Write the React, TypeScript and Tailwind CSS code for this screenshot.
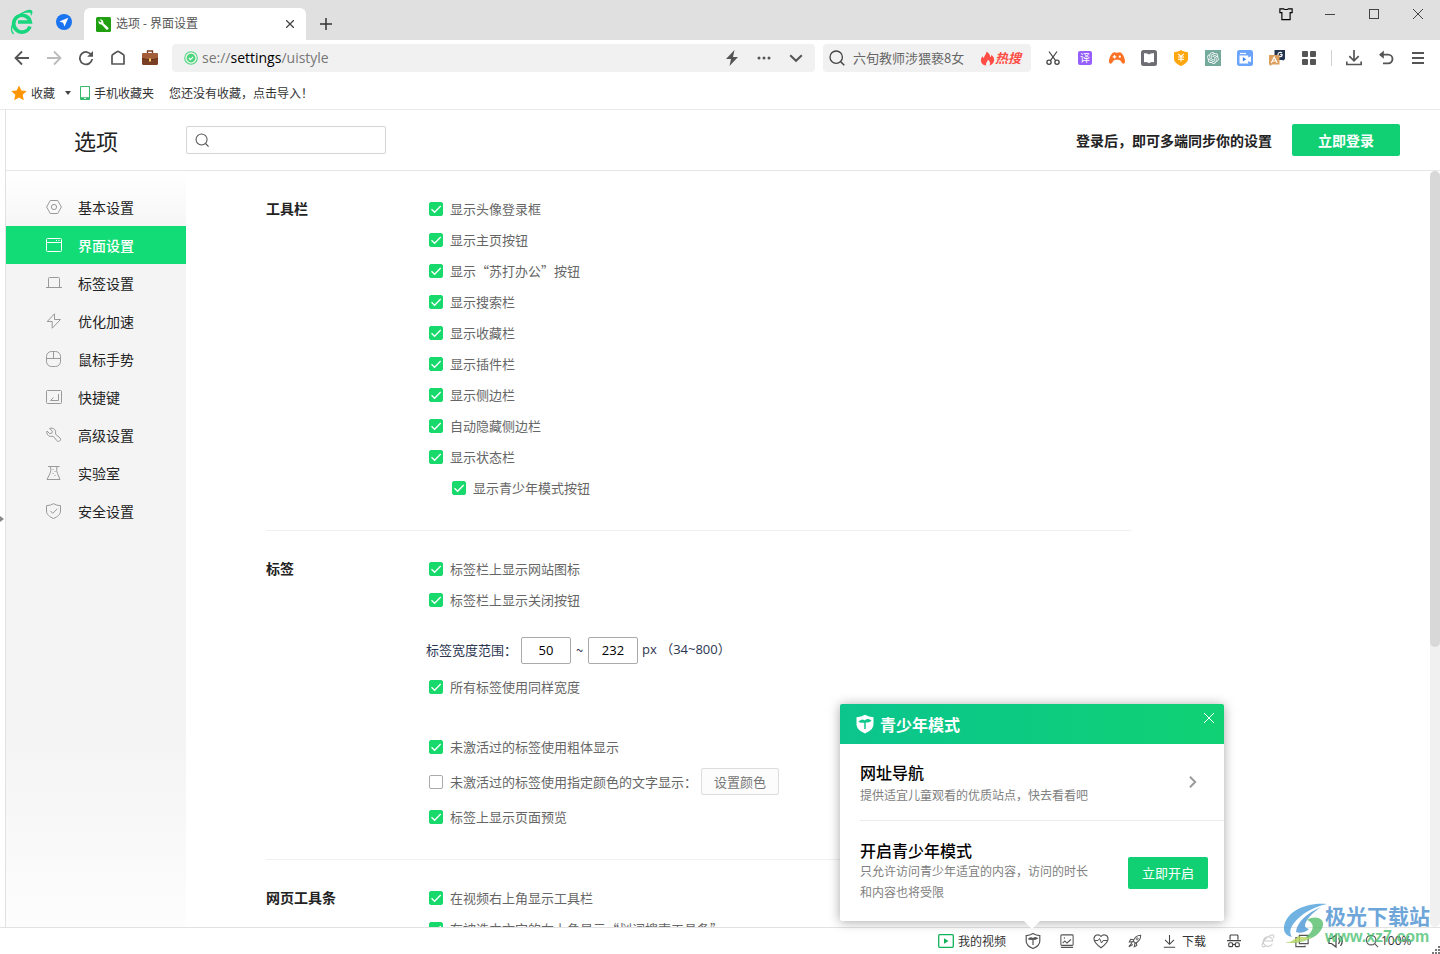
import { useState } from "react"
import type { ReactNode } from "react"
import { RiOpenaiFill } from "react-icons/ri"

interface IconProps {
    size?: number
    className?: string
    children: ReactNode
}

// 16x16 grid, stroked with the current text colour
function Icon({ size = 16, className = "", children }: IconProps) {
    return (
        <svg
            width={size}
            height={size}
            viewBox="0 0 16 16"
            fill="none"
            stroke="currentColor"
            strokeWidth="1"
            className={`shrink-0 ${className}`}
            aria-hidden="true"
        >
            {children}
        </svg>
    )
}

function BrowserLogo() {
    return (
        <svg width="24" height="26" viewBox="0 0 24 26" fill="none" aria-hidden="true">
            <path d="M20 17.500A8.400 8.400 0 1 1 20.300 13H8" stroke="#17d67e" strokeWidth="3.600" />
            <path d="M19 3C14 2 8 5.500 4.500 11.500 1.500 16.500.5 22 3.500 25" stroke="#17d67e" strokeWidth="1.300" />
            <path d="M11 4.500C15 1.500 20.500-.4 22 1.800c1 1.500.2 3.500-1.200 5.700.4-2.300.2-3.800-1.800-4.100-2.400-.4-5.200.3-8 1.100z" fill="#17d67e" />
        </svg>
    )
}

function TabStrip() {
    return (
        <header className="flex h-10 shrink-0 items-end bg-[#e0e0e0]">
            <div className="flex h-10 w-[84px] items-center pt-1 pl-[10px]">
                <button aria-label="浏览器菜单">
                    <BrowserLogo />
                </button>
                <button className="ml-[22px]" aria-label="导航">
                    <svg width="16" height="16" viewBox="0 0 16 16" aria-hidden="true">
                        <circle cx="8" cy="8" r="8" fill="#1a73f0" />
                        <path d="M12.300 3.700 3.400 7.500l3.700 1.300 1.400 3.700z" fill="#fff" />
                    </svg>
                </button>
            </div>
            <div className="flex h-8 w-[222px] items-center rounded-t-md bg-white px-3 text-xs text-[#555]">
                <svg width="15" height="15" viewBox="0 0 15 15" aria-hidden="true">
                    <rect width="15" height="15" rx="1.500" fill="#20a010" />
                    <path d="M3.600 2.600l1.900 1.900-.9 1.100-2-1.900c-.6 2.200 1 4 3 3.700l4.700 5c1.400 1 2.900-.5 1.900-1.900L7.400 6.200c.6-2.300-1.300-4.500-3.800-3.600z" fill="#fff" />
                </svg>
                <span className="ml-[5px] flex-1 font-['Open_Sans','Noto_Sans_CJK_SC',sans-serif]">选项 - 界面设置</span>
                <button aria-label="关闭标签">
                    <Icon size={8} className="text-[#444]">
                        <path d="M0 0l16 16M16 0L0 16" strokeWidth="2.600" />
                    </Icon>
                </button>
            </div>
            <button className="flex h-8 w-10 items-center justify-center text-[#333]" aria-label="新建标签">
                <svg width="12" height="12" viewBox="0 0 12 12" stroke="currentColor" strokeWidth="1.500" aria-hidden="true">
                    <path d="M6 0v12M0 6h12" />
                </svg>
            </button>
            <div className="ml-auto flex h-10 items-start text-[#444]">
                <button className="flex h-7 w-11 items-center justify-center text-black" aria-label="皮肤">
                    <Icon size={14}>
                        <path d="M1 2.200h4.500q2.500 1.400 5 0H15V6.500h-2.300v8H3.300v-8H1z" strokeWidth="1.300" />
                    </Icon>
                </button>
                <button className="flex h-7 w-11 items-center justify-center" aria-label="最小化">
                    <span className="h-px w-[10px] bg-[#444]" />
                </button>
                <button className="flex h-7 w-11 items-center justify-center" aria-label="最大化">
                    <span className="size-[10px] border border-[#444]" />
                </button>
                <button className="flex h-7 w-11 items-center justify-center" aria-label="关闭">
                    <Icon size={10}>
                        <path d="M0 0l16 16M16 0L0 16" strokeWidth="1.600" />
                    </Icon>
                </button>
            </div>
        </header>
    )
}

function ToolButton({ label, children }: { label: string; children: ReactNode }) {
    return (
        <button className="flex h-7 w-8 shrink-0 items-center justify-center" aria-label={label}>
            {children}
        </button>
    )
}

function Extensions() {
    return (
        <div className="ml-[6px] flex items-center text-[#444]">
            <ToolButton label="截图">
                <Icon>
                    <path d="M4 1.500l6.800 9.300M12 1.500L5.200 10.800" strokeWidth="1.200" />
                    <circle cx="4" cy="12.300" r="2.100" strokeWidth="1.300" />
                    <circle cx="12" cy="12.300" r="2.100" strokeWidth="1.300" />
                </Icon>
            </ToolButton>
            <ToolButton label="翻译">
                <span className="flex size-[14px] items-center justify-center rounded-xs bg-[#965ffb] text-[10px] leading-none text-white">译</span>
            </ToolButton>
            <ToolButton label="游戏">
                <Icon>
                    <path d="M4.500 2.500c1-.6 2 .3 3.500.3s2.500-.9 3.500-.3C14 3.500 16 8.500 16 11.500c0 2.800-2.500 2.800-3.800.2-.8-1.500-1.700-1.900-4.200-1.900s-3.400.4-4.200 1.900C2.500 14.300 0 14.300 0 11.500c0-3 2-8 4.500-9z" fill="#fb7226" stroke="none" />
                    <path d="M5.500 5v3.600M3.700 6.800h3.600" stroke="#fff" strokeWidth="1.200" />
                    <circle cx="10.800" cy="6.700" r="1.100" fill="#fff" stroke="none" />
                </Icon>
            </ToolButton>
            <ToolButton label="小说">
                <Icon>
                    <rect width="16" height="16" rx="2.500" fill="#6d6d73" stroke="none" />
                    <path d="M3 3.200q2.800-.4 5 1.400 2.200-1.800 5-1.400v9q-2.800-.6-5 1-2.200-1.600-5-1z" fill="#fff" stroke="none" />
                </Icon>
            </ToolButton>
            <ToolButton label="网购助手">
                <Icon>
                    <path d="M8 0c2.300 1.600 4.500 2 7 2.200V9c0 3-3.500 5.600-7 7-3.500-1.400-7-4-7-7V2.200C3.500 2 5.700 1.600 8 0z" fill="#ffa70f" stroke="none" />
                    <path d="M5.200 3.800L8 6.500l2.800-2.700M5 7h6M5 9.200h6M8 6.500v5" stroke="#fff" strokeWidth="1.100" />
                </Icon>
            </ToolButton>
            <ToolButton label="ChatGPT">
                <span className="flex size-4 items-center justify-center bg-[#74aa9c] text-white">
                    <RiOpenaiFill size={14} />
                </span>
            </ToolButton>
            <ToolButton label="录屏">
                <Icon>
                    <rect width="16" height="16" rx="2.500" fill="#6ba4fb" stroke="none" />
                    <path d="M3 3.500h6" stroke="#fff" strokeWidth="1.200" />
                    <path d="M2.500 5.500h8.700v2l2.800-1.200v6L11.200 11v2.500H2.500z" fill="#fff" stroke="none" />
                    <path d="M5.800 7l3.400 2.300-3.400 2.300z" fill="#3d7ff5" stroke="none" />
                </Icon>
            </ToolButton>
            <ToolButton label="划词翻译">
                <Icon>
                    <path d="M5.500 0H16v9l-1.500 1.500L13 10H5.500z" fill="#22344f" stroke="none" />
                    <path d="M13 3c-1.600-1.300-4-.6-4 1.600 0 2.200 2.600 2.600 4 1.300V4.700h-1.800" stroke="#fff" strokeWidth="1.200" />
                    <path d="M0 5h10.500v9.500H3L1 16l-.3-1.500H0z" fill="#dc9d5d" stroke="none" />
                    <path d="M2.300 13L5.200 7l3 6M3.400 11h3.800" stroke="#fff" strokeWidth="1.200" />
                </Icon>
            </ToolButton>
            <ToolButton label="全部扩展">
                <Icon>
                    <g fill="#555" stroke="none">
                        <rect x="1" y="1" width="6" height="6" rx="1" />
                        <rect x="9" y="1" width="6" height="6" rx="1" />
                        <rect x="1" y="9" width="6" height="6" rx="1" />
                        <rect x="9" y="9" width="6" height="6" rx="1" />
                    </g>
                </Icon>
            </ToolButton>
            <span className="mx-[6px] h-4 w-px bg-[#d0d0d0]" />
            <ToolButton label="下载">
                <Icon>
                    <path d="M8 0v10.500M3.300 6.200L8 10.800l4.700-4.600M.8 11.500v3h14.400v-3" stroke="#555" strokeWidth="1.700" />
                </Icon>
            </ToolButton>
            <ToolButton label="恢复">
                <Icon>
                    <path d="M2 4.700h8.200a4.200 4.200 0 0 1 0 8.600H5" stroke="#555" strokeWidth="1.800" />
                    <path d="M1 4.700L5.800.6v8.200z" fill="#555" stroke="none" />
                </Icon>
            </ToolButton>
            <ToolButton label="菜单">
                <Icon>
                    <path d="M2 3h12M2 8h12M2 13h12" stroke="#555" strokeWidth="1.800" />
                </Icon>
            </ToolButton>
        </div>
    )
}

function Toolbar() {
    return (
        <div className="flex h-9 shrink-0 items-center bg-white px-[6px]">
            <ToolButton label="后退">
                <Icon className="text-[#555]">
                    <path d="M15 8H1.500M8 1.500L1.500 8 8 14.500" strokeWidth="1.800" />
                </Icon>
            </ToolButton>
            <ToolButton label="前进">
                <Icon className="text-[#bbb]">
                    <path d="M1 8h13.500M8 1.500L14.500 8 8 14.500" strokeWidth="1.800" />
                </Icon>
            </ToolButton>
            <ToolButton label="刷新">
                <Icon className="text-[#555]">
                    <path d="M13.500 5.200A6.200 6.200 0 1 0 14.200 9" strokeWidth="1.800" />
                    <path d="M15 1v5.800H9.200z" fill="currentColor" stroke="none" />
                </Icon>
            </ToolButton>
            <ToolButton label="主页">
                <Icon className="text-[#555]">
                    <path d="M2 6q0-1 .8-1.500L7 1.700q1-.7 2 0l4.200 2.800Q14 5 14 6v8H2z" strokeWidth="1.700" strokeLinejoin="round" />
                </Icon>
            </ToolButton>
            <ToolButton label="苏打办公">
                <Icon>
                    <path d="M5.500 3V1h5v2" stroke="#7a3b1f" strokeWidth="1.300" />
                    <rect y="3" width="16" height="12" rx="1.500" fill="#7a3f24" stroke="none" />
                    <path d="M0 4.500Q0 3 1.500 3h13Q16 3 16 4.500V8q-8 3-16 0z" fill="#a35d38" stroke="none" />
                    <path d="M0 8.500q8 3 16 0" stroke="#5c2c15" strokeWidth=".8" />
                    <rect x="7" y="8.500" width="2" height="3" fill="#f6cf6a" stroke="none" />
                </Icon>
            </ToolButton>

            <div className="ml-[6px] flex h-7 flex-1 items-center rounded bg-[#f1f1f1] pr-[3px] pl-3">
                <Icon size={14} className="text-[#4bd67b]">
                    <circle cx="8" cy="8" r="7.200" strokeWidth="1.200" />
                    <circle cx="8" cy="8" r="5" fill="currentColor" stroke="none" />
                    <path d="M5.600 8l1.800 1.800 3-3.200" stroke="#fff" strokeWidth="1.300" />
                </Icon>
                <div className="ml-1 flex-1 font-['Open_Sans','Noto_Sans_CJK_SC',sans-serif] text-sm text-[#777]">
                    se://<span className="text-black">settings</span>/uistyle
                </div>
                <ToolButton label="极速模式">
                    <Icon className="text-[#555]">
                        <path d="M10.500 0L2 9h5L5.500 16 14 7H9z" fill="currentColor" stroke="none" />
                    </Icon>
                </ToolButton>
                <ToolButton label="更多">
                    <Icon className="text-[#555]">
                        <g fill="currentColor" stroke="none">
                            <circle cx="3" cy="8" r="1.500" />
                            <circle cx="8" cy="8" r="1.500" />
                            <circle cx="13" cy="8" r="1.500" />
                        </g>
                    </Icon>
                </ToolButton>
                <ToolButton label="展开地址栏">
                    <Icon className="text-[#555]">
                        <path d="M2.200 5.200L8 10.800l5.800-5.600" strokeWidth="2" />
                    </Icon>
                </ToolButton>
            </div>

            <div className="ml-2 flex h-7 w-52 items-center rounded bg-[#f1f1f1] pr-[10px] pl-[6px] text-[13px] text-[#666]">
                <Icon className="text-[#444]">
                    <circle cx="7.200" cy="7.200" r="6.200" strokeWidth="1.300" />
                    <path d="M11.700 11.700l3.600 3.600" strokeWidth="1.500" />
                </Icon>
                <input
                    className="ml-2 w-[118px] bg-transparent outline-none placeholder:text-[#666]"
                    placeholder="六旬教师涉猥亵8女"
                    aria-label="搜索"
                />
                <a href="#hot" className="ml-auto flex items-center font-bold text-[#ff4d45] italic">
                    <Icon size={15}>
                        <path d="M7 .5c3 2 4 4 3.700 6 1-.4 1.400-1.300 1.500-2.500C14.500 6 15.500 8 15 10.500c-.6 3-3 4.700-5 5 1.500-2 1-4.500-1.700-6.500.2 2.500-2.800 3.500-1.600 6.500C3 15 .8 12.500 1 9.500c.1-1.700 1-2.700 1.800-3.800.3 1 .6 1.500 1.300 1.800C4.500 4.500 7 3.500 7 .5z" fill="currentColor" stroke="none" />
                    </Icon>
                    热搜
                </a>
            </div>
            <Extensions />
        </div>
    )
}

function BookmarkBar() {
    return (
        <nav className="flex h-[34px] shrink-0 items-center border-b border-[#e9e9e9] bg-white pl-[11px] text-xs text-[#333]">
            <button className="flex items-center">
                <svg width="16" height="16" viewBox="0 0 16 16" aria-hidden="true">
                    <path d="M8 .5l2.300 5 5.400.6-4 3.700 1.100 5.500L8 12.600l-4.800 2.700 1.100-5.500-4-3.700 5.400-.6z" fill="#ff9500" />
                </svg>
                <span className="ml-1">收藏</span>
                <span className="ml-[10px] border-x-[3px] border-t-4 border-x-transparent border-t-[#444]" />
            </button>
            <button className="ml-[9px] flex items-center">
                <svg width="10" height="14" viewBox="0 0 10 14" fill="none" aria-hidden="true">
                    <path d="M.5.500h9v13h-9z" stroke="#35bb6c" />
                    <path d="M.5 11.200h9v2.300h-9z" fill="#35bb6c" />
                    <path d="M4 12.300h2" stroke="#fff" />
                </svg>
                <span className="ml-1">手机收藏夹</span>
            </button>
            <a href="#import" className="ml-[15px]">您还没有收藏，点击导入！</a>
        </nav>
    )
}

const menu: { label: string; icon: ReactNode }[] = [
    {
        label: "基本设置",
        icon: (
            <>
                <path d="M4.300 1.500h7.400L15.400 8l-3.700 6.500H4.300L.6 8z" />
                <circle cx="8" cy="8" r="2.600" />
            </>
        ),
    },
    {
        label: "界面设置",
        icon: (
            <>
                <rect x=".5" y="1.500" width="15" height="13" rx="1" />
                <path d="M.5 5.500h15M10 3.500h1M12.500 3.500h1" />
            </>
        ),
    },
    {
        label: "标签设置",
        icon: <path d="M2.500 12V3.500q0-1 1-1h9q1 0 1 1V12M0 12.500h16" />,
    },
    {
        label: "优化加速",
        icon: <path d="M8.500.8L1.200 8.500h5v6.700L14.500 6.500H8.500z" strokeLinejoin="round" />,
    },
    {
        label: "鼠标手势",
        icon: (
            <>
                <rect x=".5" y=".5" width="14" height="15" rx="5" />
                <path d="M.5 7.500h14M7.500.500v7" />
            </>
        ),
    },
    {
        label: "快捷键",
        icon: (
            <>
                <rect x=".5" y="1.500" width="15" height="13" rx="1" />
                <path d="M12.500 5v6.500H4.500L7.500 8.500" />
            </>
        ),
    },
    {
        label: "高级设置",
        icon: <path d="M3.500 1.500L6.500 4.200 5.800 6.200 3.700 6.700 1 4C0 7 2.500 10 6 9.300L7.500 9.500 11 13.800c1.500 1.700 4.500-.3 3.300-2.600L9.800 7.500 9.500 6C10.500 3 7 0 3.500 1.500z" strokeLinejoin="round" />,
    },
    {
        label: "实验室",
        icon: (
            <>
                <path d="M2 1.500h11.500M4.500 1.500q1 4-.5 7L1 14.500h13L11.500 8.500q-1.500-3-.5-7" />
                <path d="M6.500 4.500h1M8.500 6.500h1M6.500 8.500h1M8.500 10.500h1" />
            </>
        ),
    },
    {
        label: "安全设置",
        icon: <path d="M7.500.700q3 1.800 7 2V8c0 3.500-3 5.800-7 7.500C3.500 13.800.5 11.500.5 8V2.700q4-.2 7-2zM4.300 7.800l2.500 2.500 4.500-4.500" />,
    },
]

function Sidebar() {
    const [active, setActive] = useState("界面设置")
    return (
        <nav className="w-[180px] shrink-0 bg-[linear-gradient(to_bottom,#fff,#f4f4f4_9%,#f4f4f4_75%,#fdfdfd)] pt-[17px]">
            {menu.map((item) => (
                <button
                    key={item.label}
                    onClick={() => setActive(item.label)}
                    className={
                        item.label === active
                            ? "flex h-[38px] w-full items-center gap-4 bg-[#12dc75] pl-10 text-sm font-medium text-white"
                            : "flex h-[38px] w-full items-center gap-4 pl-10 text-sm text-[#222]"
                    }
                >
                    <Icon className={item.label === active ? "text-white" : "text-[#999]"}>{item.icon}</Icon>
                    {item.label}
                </button>
            ))}
        </nav>
    )
}

interface CheckRowProps {
    label: string
    checked?: boolean
    nested?: boolean
}

function CheckRow({ label, checked = true, nested = false }: CheckRowProps) {
    return (
        <label className={`flex h-[31px] items-center gap-[7px] text-[13px] whitespace-nowrap text-[#666] ${nested ? "pl-[26px]" : "pl-[3px]"}`}>
            <span className="grid size-[14px] shrink-0">
                <input
                    type="checkbox"
                    defaultChecked={checked}
                    className="peer col-start-1 row-start-1 size-[14px] appearance-none rounded-xs border border-[#aaa] bg-white checked:border-[#18d96c] checked:bg-[#18d96c]"
                />
                <svg
                    viewBox="0 0 14 14"
                    fill="none"
                    className="pointer-events-none invisible col-start-1 row-start-1 size-[14px] peer-checked:visible"
                    aria-hidden="true"
                >
                    <path d="M2.500 7.200L5.600 10.300 11.700 4" stroke="#fff" strokeWidth="1.300" />
                </svg>
            </span>
            {label}
        </label>
    )
}

function Section({ title, children }: { title: string; children: ReactNode }) {
    return (
        <section className="flex max-w-[865px] border-b border-[#f0f0f0] pt-[22px] pb-[27px]">
            <h2 className="h-[31px] w-40 shrink-0 text-sm leading-[31px] font-bold text-[#222]">{title}</h2>
            <div className="flex-1">{children}</div>
        </section>
    )
}

const toolbarOptions = [
    "显示头像登录框",
    "显示主页按钮",
    "显示“苏打办公”按钮",
    "显示搜索栏",
    "显示收藏栏",
    "显示插件栏",
    "显示侧边栏",
    "自动隐藏侧边栏",
    "显示状态栏",
]

function Settings() {
    return (
        <main className="min-w-0 flex-1 overflow-hidden pl-20">
            <Section title="工具栏">
                {toolbarOptions.map((label) => (
                    <CheckRow key={label} label={label} />
                ))}
                <CheckRow label="显示青少年模式按钮" nested />
            </Section>
            <Section title="标签">
                <CheckRow label="标签栏上显示网站图标" />
                <CheckRow label="标签栏上显示关闭按钮" />
                <div className="mt-[21px] mb-[7px] flex h-7 items-center text-[13px] text-[#2c3550]">
                    <label htmlFor="min-width" className="w-[95px]">标签宽度范围：</label>
                    <input
                        id="min-width"
                        defaultValue="50"
                        className="h-[27px] w-[50px] rounded-xs border border-[#aaa] text-center font-['Open_Sans',sans-serif] text-black"
                    />
                    <span className="w-[17px] text-center">~</span>
                    <input
                        aria-label="最大宽度"
                        defaultValue="232"
                        className="h-[27px] w-[50px] rounded-xs border border-[#aaa] text-center font-['Open_Sans',sans-serif] text-black"
                    />
                    <span className="ml-1 font-['Open_Sans','Noto_Sans_CJK_SC',sans-serif]">px （34~800）</span>
                </div>
                <CheckRow label="所有标签使用同样宽度" />
                <div className="mt-[29px]">
                    <CheckRow label="未激活过的标签使用粗体显示" />
                </div>
                <div className="flex h-[39px] items-center">
                    <CheckRow label="未激活过的标签使用指定颜色的文字显示：" checked={false} />
                    <button className="ml-1 h-[27px] w-[78px] rounded-xs border border-[#ddd] bg-[#fcfcfc] text-[13px] text-[#777]">
                        设置颜色
                    </button>
                </div>
                <CheckRow label="标签上显示页面预览" />
            </Section>
            <Section title="网页工具条">
                <CheckRow label="在视频右上角显示工具栏" />
                <CheckRow label="在被选中文字的右上角显示“划词搜索工具条”" />
            </Section>
        </main>
    )
}

function Shield({ solid = false }: { solid?: boolean }) {
    return (
        <svg width={solid ? 20 : 16} height={solid ? 20 : 16} viewBox="0 0 16 16" fill="none" className="shrink-0" aria-hidden="true">
            <path
                d="M8 .6q3 1.900 6.800 2V8c0 3.600-3 6-6.800 7.500C4.200 14 1.200 11.600 1.200 8V2.600q3.800-.1 6.800-2z"
                fill={solid ? "#fff" : "none"}
                stroke={solid ? "none" : "#555"}
                strokeWidth="1.200"
            />
            <path
                d="M8 12V6.500M8 6Q6 3.800 3.800 6 5.800 6.800 8 6M8 6Q9.500 3.800 12.200 5.300 10.500 6.800 8 6"
                fill={solid ? "#0dc78b" : "#555"}
                stroke={solid ? "#0dc78b" : "#555"}
                strokeWidth="1.200"
            />
        </svg>
    )
}

function TeenPopup() {
    return (
        <aside className="absolute right-[216px] bottom-[33px] w-96 rounded-xs bg-white shadow-[0_1px_12px_rgba(0,0,0,0.35)]">
            <div className="flex h-10 items-center gap-[5px] rounded-t-xs bg-linear-to-r from-[#0bc58d] to-[#10d173] pl-[15px] text-base font-bold text-white">
                <Shield solid />
                青少年模式
                <button className="mr-[10px] mb-3 ml-auto" aria-label="关闭">
                    <Icon size={10}>
                        <path d="M0 0l16 16M16 0L0 16" strokeWidth="1.600" />
                    </Icon>
                </button>
            </div>
            <a href="#nav" className="ml-5 flex h-[77px] items-center border-b border-[#ebebeb] pr-6">
                <div className="flex-1">
                    <h3 className="text-base leading-6 font-medium text-black">网址导航</h3>
                    <p className="text-xs leading-[21px] text-[#808080]">提供适宜儿童观看的优质站点，快去看看吧</p>
                </div>
                <Icon size={14} className="text-[#999]">
                    <path d="M4.500 2l6 6-6 6" strokeWidth="2.200" />
                </Icon>
            </a>
            <div className="flex h-[100px] items-center pr-4 pl-5">
                <div className="w-[232px]">
                    <h3 className="text-base leading-5 font-medium text-black">开启青少年模式</h3>
                    <p className="text-xs leading-[21px] text-[#808080]">只允许访问青少年适宜的内容，访问的时长和内容也将受限</p>
                </div>
                <button className="mt-1 ml-auto h-8 w-20 rounded-xs bg-[#10d073] text-[13px] text-white">立即开启</button>
            </div>
            <span className="absolute top-full left-46 border-x-8 border-t-8 border-x-transparent border-t-white" />
        </aside>
    )
}

function StatusButton({ label, children }: { label: string; children: ReactNode }) {
    return (
        <button className="flex h-full w-[34px] items-center justify-center" aria-label={label}>
            {children}
        </button>
    )
}

function StatusBar() {
    return (
        <footer className="relative flex h-[27px] shrink-0 items-center justify-end border-t border-[#e2e2e2] bg-white text-xs text-[#333]">
            <button className="mr-[10px] flex items-center gap-1">
                <Icon className="text-[#10b35a]">
                    <rect x=".7" y="1.700" width="14.600" height="12.600" rx="1" strokeWidth="1.300" />
                    <path d="M6 5.300l4.500 2.700L6 10.700z" fill="currentColor" stroke="none" />
                </Icon>
                我的视频
            </button>
            <StatusButton label="青少年模式">
                <Shield />
            </StatusButton>
            <StatusButton label="图片">
                <Icon size={14} className="text-[#555]">
                    <rect x="1" y="1" width="14" height="12" rx="1" strokeWidth="1.200" />
                    <path d="M3 10.500l2.500-2.500L8 10.300l4.500-4M1 15.300h14" strokeWidth="1.200" />
                    <circle cx="5" cy="4.500" r=".8" fill="currentColor" stroke="none" />
                </Icon>
            </StatusButton>
            <StatusButton label="健康">
                <Icon className="text-[#555]">
                    <path d="M8 3.500C6 .8 1 1.500 1 6c0 3 3.500 6.200 7 8.800 3.500-2.600 7-5.800 7-8.800 0-4.500-5-5.200-7-2.500z" strokeWidth="1.100" />
                    <path d="M1.500 7.500H5l1.500-2L8.500 10l1.500-2.500h4.500" />
                </Icon>
            </StatusButton>
            <StatusButton label="加速器">
                <Icon size={14} className="text-[#555]">
                    <path d="M14.500 1.500c-4 0-7 2.500-8.500 6.500l2.500 2.500c3.800-1.700 6-5 6-9zM6.500 6.500L3 6 1.500 9H6M9.500 9.500l.5 3.500-2.800 1.500L8 10.500M4.500 10L1 14.500 5.500 12" strokeWidth="1.200" />
                    <circle cx="10.500" cy="5.500" r="1.200" />
                </Icon>
            </StatusButton>
            <button className="flex w-[65px] items-center justify-center gap-[6px]">
                <Icon size={13} className="text-[#444]">
                    <path d="M8 0v11M2.500 6L8 11.500 13.500 6M1 15h14" strokeWidth="1.300" />
                </Icon>
                下载
            </button>
            <StatusButton label="无痕">
                <Icon size={14} className="text-[#444]">
                    <path d="M3.500 6.500V2.200q0-1 1-1h7q1 0 1 1v4.300M0 7.500h16" strokeWidth="1.300" />
                    <rect x="2" y="10" width="4.500" height="4.500" rx="1.500" strokeWidth="1.300" />
                    <rect x="9.500" y="10" width="4.500" height="4.500" rx="1.500" strokeWidth="1.300" />
                    <path d="M6.500 12h3" strokeWidth="1.300" />
                </Icon>
            </StatusButton>
            <StatusButton label="兼容模式">
                <Icon size={14} className="text-[#ccc]">
                    <path d="M13 11A5.500 5.500 0 1 1 13.500 8H3M14 5c1.500-3 .5-5-3-3.500C6 3.500 0 10 1.500 14c.8 1.500 2.500.5 3.500 0" strokeWidth="1.200" />
                </Icon>
            </StatusButton>
            <StatusButton label="分屏">
                <Icon size={14} className="text-[#555]">
                    <path d="M5 1.500h10v9.500H5zM3 4H1v10.500h10.500V13" strokeWidth="1.300" />
                </Icon>
            </StatusButton>
            <StatusButton label="静音">
                <Icon className="text-[#444]">
                    <path d="M1 5.500h2.500L8 2v12l-4.500-3.500H1zM10.500 5q2 3 0 6M12.500 3q3.600 5 0 10" strokeWidth="1.200" />
                </Icon>
            </StatusButton>
            <button className="flex w-[87px] items-center gap-[2px] pl-3 font-['Open_Sans',sans-serif]">
                <Icon size={14} className="text-[#555]">
                    <circle cx="7" cy="7" r="5.500" strokeWidth="1.300" />
                    <path d="M11 11l4 4" strokeWidth="1.300" />
                </Icon>
                100%
            </button>
            <svg width="9" height="9" viewBox="0 0 9 9" fill="#777" className="absolute right-0 bottom-0" aria-hidden="true">
                <path d="M7 1h2v2H7zM4 4h2v2H4zM7 4h2v2H7zM1 7h2v2H1zM4 7h2v2H4zM7 7h2v2H7z" />
            </svg>
        </footer>
    )
}

function SiteBadge() {
    return (
        <div className="pointer-events-none absolute right-[10px] bottom-[7px] flex items-center opacity-80">
            <svg width="44" height="44" viewBox="0 0 44 44" fill="none" aria-hidden="true">
                <path d="M44 1C22-1 3 9 1 24c-.6 6 3 9 8 10-3-4-2-9 2-14C18 11 30 4 44 1z" fill="#4da0dc" />
                <path d="M38 4C24 10 14 19 13 29c4 2 10 0 13-3-4-1-5-3-3-7 3-6 9-11 15-15z" fill="#4a97d6" />
                <path d="M24 17c8-5 17-2 16 5-2 12-20 19-38 18 14-1 24-6 27-13 2-4 0-8-5-10z" fill="#56bd6b" />
                <path d="M2 40c10 .5 20-1.500 27-6-6 1-10 0-14-1-2 3-7 6-13 7z" fill="#b5d75a" />
            </svg>
            <div className="-ml-[2px]">
                <p className="text-[21px] leading-6 font-bold text-[#4a90d0]">极光下载站</p>
                <p className="font-['Liberation_Sans',sans-serif] text-base leading-5 font-bold text-[#4cc272]">www.xz7.com</p>
            </div>
        </div>
    )
}

export default function App() {
    return (
        <div
            lang="zh-CN"
            className="relative flex h-screen flex-col overflow-hidden bg-white font-['Noto_Sans_CJK_SC',sans-serif]"
        >
            <TabStrip />
            <Toolbar />
            <BookmarkBar />
            <div className="flex min-h-0 flex-1">
                <button className="flex w-[5px] shrink-0 items-center" aria-label="展开侧边栏">
                    <span className="border-y-[3px] border-l-4 border-y-transparent border-l-[#888]" />
                </button>
                <div className="flex min-w-0 flex-1 flex-col border-l border-[#e2e2e2]">
                    <div className="flex h-[61px] shrink-0 items-center border-b border-[#e6e6e6] pr-10">
                        <h1 className="w-[180px] text-center text-[22px] text-[#222]">选项</h1>
                        <label className="flex h-7 w-[200px] items-center rounded-xs border border-[#d4d4d4] px-2">
                            <Icon size={14} className="text-[#555]">
                                <circle cx="7.500" cy="7.500" r="6.300" strokeWidth="1.200" />
                                <path d="M12 12l3.500 3.500" strokeWidth="1.300" />
                            </Icon>
                            <input className="ml-2 w-full text-[13px] outline-none" aria-label="搜索设置" />
                        </label>
                        <p className="ml-auto text-sm font-bold text-[#222]">登录后，即可多端同步你的设置</p>
                        <button className="ml-5 h-8 w-[108px] rounded-xs bg-[#10d073] text-sm font-bold text-white">立即登录</button>
                    </div>
                    <div className="flex min-h-0 flex-1">
                        <Sidebar />
                        <Settings />
                        <div className="w-[10px] shrink-0 rounded-full bg-[#f0f0f0]">
                            <div className="h-[63%] rounded-full bg-[#d8d8d8]" />
                        </div>
                    </div>
                </div>
            </div>
            <StatusBar />
            <TeenPopup />
            <SiteBadge />
        </div>
    )
}
